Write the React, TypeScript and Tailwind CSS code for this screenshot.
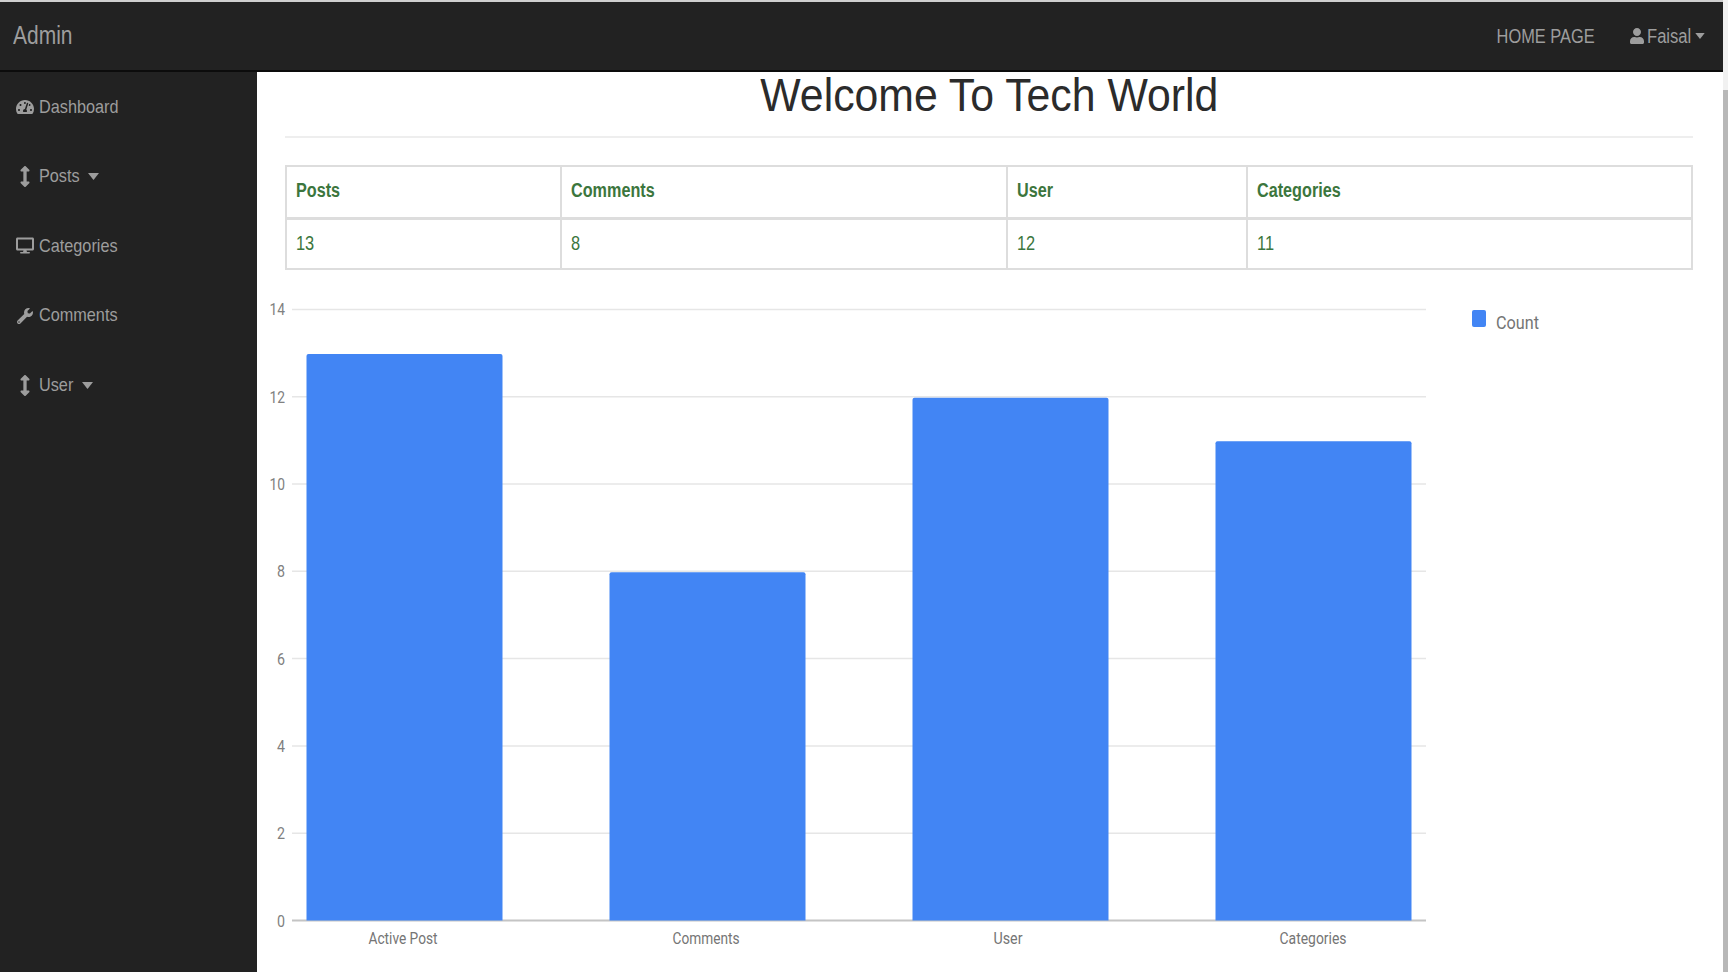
import React from "react";
import {
  FaTachometerAlt,
  FaArrowsAltV,
  FaDesktop,
  FaWrench,
  FaUser,
} from "react-icons/fa";

const Caret = ({ className }: { className?: string }) => (
  <svg className={className} viewBox="0 0 11 7" fill="currentColor">
    <path d="M0 0h11L5.5 7z" />
  </svg>
);

const menu = [
  { label: "Dashboard", icon: <FaTachometerAlt className="w-[18px] h-[18px]" />, w: "w-auto" },
  { label: "Posts", icon: <FaArrowsAltV className="w-[18px] h-[21px]" />, caret: true, w: "w-[49px]" },
  { label: "Categories", icon: <FaDesktop className="w-[18px] h-[19px]" />, w: "w-auto" },
  { label: "Comments", icon: <FaWrench className="ml-[1px] w-[16px] h-[18px]" />, w: "w-auto" },
  { label: "User", icon: <FaArrowsAltV className="w-[18px] h-[21px]" />, caret: true, w: "w-[43px]" },
];

const bars = [
  { label: "Active Post", value: 13, x: 306.5, tx: 403, len: 69 },
  { label: "Comments", value: 8, x: 609.5, tx: 706, len: 67 },
  { label: "User", value: 12, x: 912.5, tx: 1008, len: 29 },
  { label: "Categories", value: 11, x: 1215.5, tx: 1313, len: 67 },
];

const ticks = [0, 2, 4, 6, 8, 10, 12, 14];
const zeroY = 920.5;
const unit = 43.65;

const Chart = () => (
  <svg
    className="block w-[1466px] h-[692px]"
    viewBox="257 280 1466 692"
    fontFamily="Roboto, sans-serif"
  >
    {ticks.map((t) => (
      <g key={t}>
        <line
          x1={292}
          x2={1426}
          y1={zeroY - t * unit}
          y2={zeroY - t * unit}
          stroke={t === 0 ? "#c4c4c4" : "#e6e6e6"}
          strokeWidth={t === 0 ? 2 : 1.5}
        />
        <text
          x={285}
          y={zeroY - t * unit + 6}
          textAnchor="end"
          fontSize={16}
          fill="#808080"
          textLength={t > 9 ? 15.5 : 8}
          lengthAdjust="spacingAndGlyphs"
        >
          {t}
        </text>
      </g>
    ))}
    {bars.map((b) => (
      <g key={b.label}>
        <path
          d={`M${b.x} ${zeroY}V${zeroY - b.value * unit + 3}q0 -2 2 -2H${b.x + 194}q2 0 2 2V${zeroY}z`}
          fill="#4285f4"
        />
        <text
          x={b.tx}
          y={944}
          textAnchor="middle"
          fontSize={16}
          fill="#757575"
          textLength={b.len}
          lengthAdjust="spacingAndGlyphs"
        >
          {b.label}
        </text>
      </g>
    ))}
    <rect x={1472} y={310} width={14} height={17} rx={2} fill="#4285f4" />
    <text
      x={1496}
      y={329}
      fontSize={18}
      fill="#757575"
      textLength={43}
      lengthAdjust="spacingAndGlyphs"
    >
      Count
    </text>
  </svg>
);

const App = () => {
  return (
    <div className="flex h-[972px] w-full overflow-hidden bg-white font-['Liberation_Sans',Arial,sans-serif]">
      <div className="flex flex-1 flex-col min-w-0">
        <div className="h-[2px] bg-[#cfcfcf]" />
        <header className="flex h-[70px] shrink-0 items-center justify-between border-b-2 border-[#0c0c0c] bg-[#222222] pl-[13px] pr-[18px] text-[#9d9d9d]">
          <span className="inline-block origin-left scale-x-[0.84] text-[25px]">Admin</span>
          <div className="flex items-center">
            <span className="inline-block origin-right scale-x-[0.82] text-[20px] mr-[35px]">HOME PAGE</span>
            <FaUser className="w-[14px] h-[18px] mr-[3px]" />
            <span className="inline-block origin-left scale-x-[0.83] text-[20px] w-[48px]">Faisal</span>
            <Caret className="w-[10px] h-[6px]" />
          </div>
        </header>
        <div className="flex flex-1 min-h-0">
          <aside className="w-[257px] shrink-0 bg-[#222222] text-[#9d9d9d]">
            {menu.map((m) => (
              <div key={m.label} className="flex h-[69.6px] items-center pl-[16px]">
                <span className="flex w-[23px] shrink-0">{m.icon}</span>
                <span className={`inline-block origin-left scale-x-[0.855] text-[19px] ${m.w}`}>
                  {m.label}
                </span>
                {m.caret && <Caret className="w-[11px] h-[7px]" />}
              </div>
            ))}
          </aside>
          <main className="flex-1 min-w-0 pl-[28px] pr-[30px]">
            <h1 className="text-center text-[46px] leading-[46px] text-[#2b2b2b]">
              <span className="inline-block scale-x-[0.93]">Welcome To Tech World</span>
            </h1>
            <hr className="mt-[18px] border-t-[2px] border-[#eeeeee]" />
            <table className="mt-[27px] w-full table-fixed border-collapse text-[20px] text-[#3c763d]">
              <thead>
                <tr className="h-[52px] border-b-[3px] border-[#dddddd]">
                  {["Posts", "Comments", "User", "Categories"].map((h, i) => (
                    <th
                      key={h}
                      className={`border-2 border-[#dddddd] px-[9px] pb-[4px] text-left ${
                        i === 0 ? "w-[275px]" : i === 1 ? "w-[446px]" : i === 2 ? "w-[240px]" : ""
                      }`}
                    >
                      <span className="inline-block origin-left scale-x-[0.81]">{h}</span>
                    </th>
                  ))}
                </tr>
              </thead>
              <tbody>
                <tr className="h-[51px]">
                  {["13", "8", "12", "11"].map((v, i) => (
                    <td key={i} className="border-2 border-[#dddddd] px-[9px] pb-[2px]">
                      <span className="inline-block origin-left scale-x-[0.82]">{v}</span>
                    </td>
                  ))}
                </tr>
              </tbody>
            </table>
            <div className="ml-[-28px] mt-[10px]">
              <Chart />
            </div>
          </main>
        </div>
      </div>
      <div className="flex w-[5px] shrink-0 flex-col bg-[#f1f1f1]">
        <div className="h-[90px]" />
        <div className="flex-1 bg-[#b8b8b8]" />
      </div>
    </div>
  );
};

export default App;
